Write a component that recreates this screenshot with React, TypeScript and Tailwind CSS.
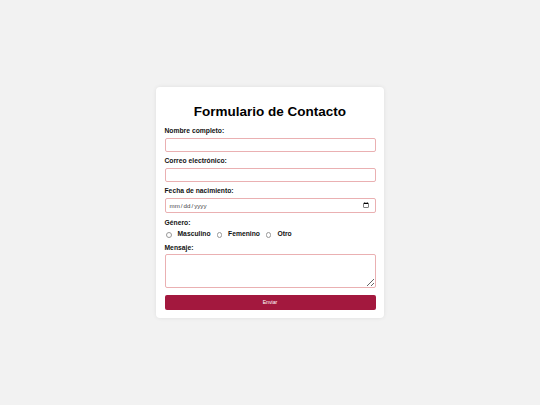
import React from 'react';

const generos = ['Masculino', 'Femenino', 'Otro'];

function Field({ label, children, className = '' }: { label: string; children: React.ReactNode; className?: string }) {
  return (
    <div className={className}>
      <label className="block text-[6.75px] leading-[8px] font-bold text-[#111] mb-[3px]">{label}</label>
      {children}
    </div>
  );
}

const inputCls =
  'block w-full h-[14px] border border-[#eab0b2] rounded-[2px] bg-white px-[3px] text-[5.6px] outline-none';

export default function App() {
  return (
    <div className="min-h-screen w-full bg-[#f2f2f2] flex items-center justify-center font-['Liberation_Sans',Arial,sans-serif]">
      <form
        className="w-[228px] bg-white rounded-[4px] shadow-[0_0_4px_rgba(0,0,0,0.08)] px-[8.5px] pt-[18px] pb-[8px]"
        onSubmit={(e) => e.preventDefault()}
      >
        <h2 className="text-center text-[13.5px] leading-[14px] font-bold text-black mb-[8px]">
          Formulario de Contacto
        </h2>

        <Field label="Nombre completo:">
          <input type="text" className={inputCls} />
        </Field>

        <Field label="Correo electrónico:" className="mt-[5px]">
          <input type="email" className={inputCls} />
        </Field>

        <Field label="Fecha de nacimiento:" className="mt-[5px]">
          <input type="date" className={inputCls + ' h-[15px] text-[6.2px] text-[#444]'} />
        </Field>

        <div className="mt-[6px]">
          <div className="text-[6.75px] leading-[8px] font-bold text-[#111] mb-[2px]">Género:</div>
          <div className="flex items-center h-[10px] pl-[1.5px]">
            {generos.map((g) => (
              <label key={g} className="flex items-center mr-[6px]">
                <span className="w-[5.5px] h-[5.5px] rounded-full border-[0.7px] border-[#999] bg-white mt-[2px] mr-[6px]" />
                <span className="text-[6.75px] leading-[8px] font-bold text-[#111]">{g}</span>
              </label>
            ))}
          </div>
        </div>

        <div className="mt-[5.5px]">
          <label className="block text-[6.75px] leading-[8px] font-bold text-[#111] mb-[2px]">Mensaje:</label>
          <textarea className="block w-full h-[33.5px] border border-[#eab0b2] rounded-[2px] bg-white text-[5.6px] outline-none" />
        </div>

        <button
          type="submit"
          className="mt-[7.5px] block w-full h-[15px] rounded-[2px] bg-[#a3183e] text-white text-[5.2px] leading-[15px]"
        >
          Enviar
        </button>
      </form>
    </div>
  );
}
